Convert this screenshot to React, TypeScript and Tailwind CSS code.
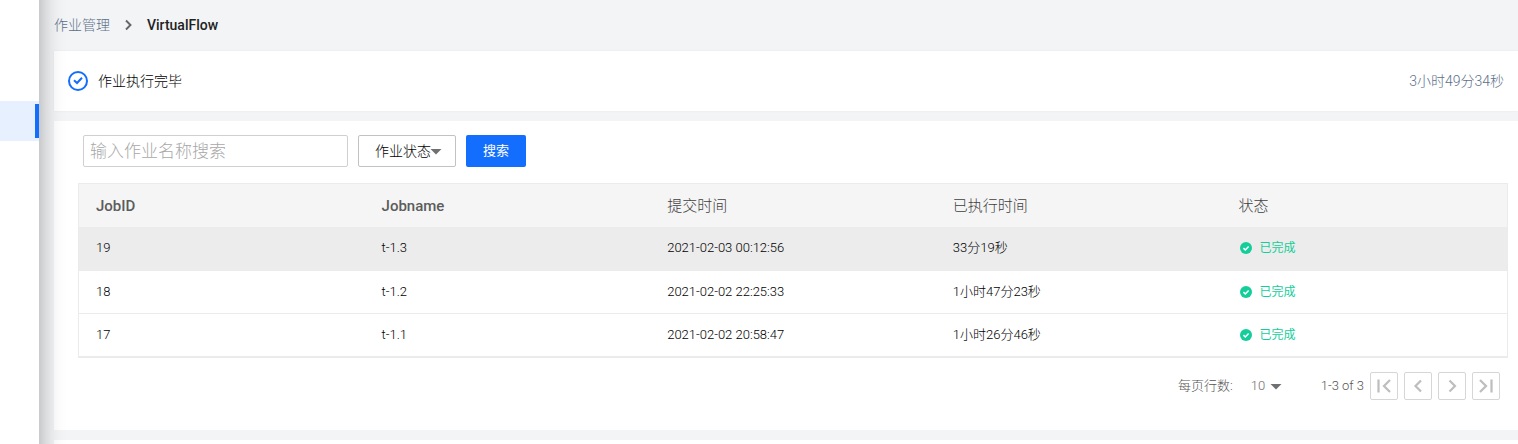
import type { ReactNode } from "react";

type Job = { id: number; name: string; submitted: string; elapsed: string };

const jobs: Job[] = [
  { id: 19, name: "t-1.3", submitted: "2021-02-03 00:12:56", elapsed: "33分19秒" },
  { id: 18, name: "t-1.2", submitted: "2021-02-02 22:25:33", elapsed: "1小时47分23秒" },
  { id: 17, name: "t-1.1", submitted: "2021-02-02 20:58:47", elapsed: "1小时26分46秒" },
];

const columns = ["JobID", "Jobname", "提交时间", "已执行时间", "状态"];

function Caret() {
  return (
    <svg className="pointer-events-none h-1.5 w-3 shrink-0" viewBox="0 0 12 6" aria-hidden="true">
      <path d="M0.5 0h11L6 5.6z" fill="#707070" />
    </svg>
  );
}

function PageButton({ label, children }: { label: string; children: ReactNode }) {
  return (
    <button
      type="button"
      aria-label={label}
      className="flex size-7 items-center justify-center rounded-xs border border-[#d6d6d6] bg-white"
    >
      <svg
        className="size-[26px]"
        viewBox="0 0 26 26"
        fill="none"
        stroke="#bdbdbd"
        strokeWidth="2.2"
        aria-hidden="true"
      >
        {children}
      </svg>
    </button>
  );
}

function Breadcrumb() {
  return (
    <nav className="flex h-[51px] items-center pb-px text-sm" aria-label="breadcrumb">
      <a href="#jobs" className="font-light text-[#5c7088]">作业管理</a>
      <svg className="mx-3.5 h-3 w-2" viewBox="0 0 8 12" fill="none" aria-hidden="true">
        <path d="M2 1.5L6.500 6L2 10.5" stroke="#666" strokeWidth="1.9" />
      </svg>
      <span className="ml-px font-medium text-[#222]">VirtualFlow</span>
    </nav>
  );
}

function StatusBanner() {
  return (
    <section className="flex h-[60px] items-center bg-white px-3.5 text-sm shadow-[0_0_2px_rgba(0,0,0,0.06)]">
      <svg className="size-5" viewBox="0 0 20 20" fill="none" stroke="#136efd" strokeWidth="2" aria-hidden="true">
        <circle cx="10" cy="10" r="9" />
        <path d="M6 9.3L9 12L14 6.800" />
      </svg>
      <span className="ml-2.5 font-light text-black">作业执行完毕</span>
      <span className="ml-auto font-light text-[#5c7088]">3小时49分34秒</span>
    </section>
  );
}

function Filters() {
  return (
    <form className="ml-[5px] flex gap-2.5" onSubmit={(e) => e.preventDefault()}>
      <input
        type="text"
        aria-label="作业名称"
        placeholder="输入作业名称搜索"
        className="h-8 w-[265px] rounded-xs border border-[#d0d0d0] px-1.5 text-[17px] font-light outline-none placeholder:text-[#a8a8a8]"
      />
      <div className="relative h-8 w-[98px]">
        <select
          aria-label="作业状态"
          className="size-full appearance-none rounded-xs border border-[#c2c2c2] bg-white pb-px pl-4 text-sm font-light text-black"
        >
          <option>作业状态</option>
        </select>
        <span className="pointer-events-none absolute inset-y-0 right-3.5 flex items-center pt-0.5">
          <Caret />
        </span>
      </div>
      <button type="submit" className="h-8 w-[60px] rounded-xs bg-[#136efd] text-[13px] text-white">
        搜索
      </button>
    </form>
  );
}

function JobTable() {
  return (
    <table className="mt-4 w-full table-fixed border-separate border-spacing-0 border border-[#ebebeb] text-left">
      <thead>
        <tr className="h-[43px] bg-[#f5f5f5] text-[15px] text-[#5c5c5c]">
          {columns.map((column, i) => (
            <th
              key={column}
              scope="col"
              className={
                i < 2
                  ? "p-0 pt-0.5 pl-[17px] font-medium"
                  : "p-0 pt-0.5 pl-[17px] font-light text-[#404040]"
              }
            >
              {column}
            </th>
          ))}
        </tr>
      </thead>
      <tbody className="text-[13px] font-light text-black">
        {jobs.map((job, i) => (
          <tr
            key={job.id}
            className={
              i === 0
                ? "h-11 bg-[#ececec] *:border-b *:border-[#ececec] *:p-0 *:pb-0.5 *:pl-[17px]"
                : "h-[43px] bg-white *:border-b *:border-[#ebebeb] *:p-0 *:pl-[17px]"
            }
          >
            <td>{job.id}</td>
            <td>{job.name}</td>
            <td>{job.submitted}</td>
            <td>{job.elapsed}</td>
            <td>
              <span className="flex items-center gap-[7px] pl-0.5 text-xs font-normal text-[#13ce9a]">
                <svg className="size-3" viewBox="0 0 12 12" aria-hidden="true">
                  <circle cx="6" cy="6" r="6" fill="#13ce9a" />
                  <path d="M3.4 6.1L5.3 7.9L8.6 4.4" fill="none" stroke="#fff" strokeWidth="1.5" />
                </svg>
                已完成
              </span>
            </td>
          </tr>
        ))}
      </tbody>
    </table>
  );
}

function Pagination() {
  return (
    <div className="mt-3.5 mr-2 flex items-center justify-end text-[13px] font-light text-[#555]">
      <label htmlFor="page-size">每页行数:</label>
      <div className="relative ml-[18px] w-[31px]">
        <select id="page-size" className="w-full appearance-none bg-transparent text-[#707070]">
          <option>10</option>
        </select>
        <span className="pointer-events-none absolute inset-y-0 right-0 flex items-center pt-0.5">
          <Caret />
        </span>
      </div>
      <span className="ml-[39px]">1-3 of 3</span>
      <div className="ml-1.5 flex gap-1.5">
        <PageButton label="第一页">
          <path d="M7.5 6.5v13M19 7L13 13l6 6" />
        </PageButton>
        <PageButton label="上一页">
          <path d="M16 7.5L10.5 13l5.500 5.500" />
        </PageButton>
        <PageButton label="下一页">
          <path d="M10.500 7.500L16 13l-5.500 5.500" />
        </PageButton>
        <PageButton label="最后一页">
          <path d="M18.500 6.500v13M7 7l6 6l-6 6" />
        </PageButton>
      </div>
    </div>
  );
}

export default function App() {
  return (
    <div className="flex h-screen overflow-hidden bg-[#f3f4f6] font-['Roboto','Noto_Sans_CJK_SC',sans-serif]">
      <aside className="relative z-10 -my-8 w-[39px] shrink-0 bg-white pt-[133px] shadow-[0_0_24px_rgba(0,0,0,0.35)]">
        <a href="#jobs" aria-label="作业管理" className="flex h-10 items-center justify-end bg-[#e6f0ff]">
          <span className="h-[34px] w-1 bg-[#136efd]" />
        </a>
      </aside>
      <main className="flex min-w-0 flex-1 flex-col gap-2.5 pl-[15px]">
        <div>
          <Breadcrumb />
          <StatusBanner />
        </div>
        <section className="bg-white pt-3.5 pr-2.5 pb-[30px] pl-6">
          <Filters />
          <JobTable />
          <Pagination />
        </section>
        <section className="flex-1 bg-white" />
      </main>
    </div>
  );
}
